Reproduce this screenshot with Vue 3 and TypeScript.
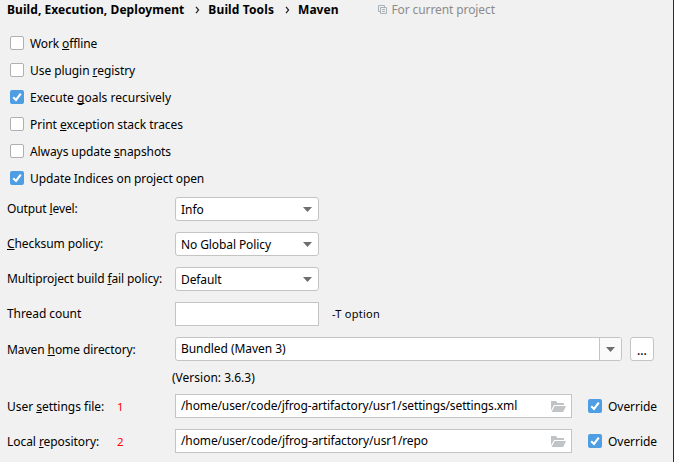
<script setup lang="ts">
interface Label { before: string; key: string; after: string; ls: number }
interface Option extends Label { checked: boolean }
interface Choice extends Label { value: string; vls: number }
interface PathRow extends Label { mark: string; path: string; vls: number }

const options: Option[] = [
  { before: 'Work ', key: 'o', after: 'ffline', ls: -0.12, checked: false },
  { before: 'Use plugin ', key: 'r', after: 'egistry', ls: -0.07, checked: false },
  { before: 'Execute ', key: 'g', after: 'oals recursively', ls: 0.01, checked: true },
  { before: 'Print ', key: 'e', after: 'xception stack traces', ls: -0.04, checked: false },
  { before: 'Always update ', key: 's', after: 'napshots', ls: -0.08, checked: false },
  { before: 'Update Indices on project open', key: '', after: '', ls: -0.09, checked: true },
]
const choices: Choice[] = [
  { before: 'Output ', key: 'l', after: 'evel:', ls: -0.12, value: 'Info', vls: 0 },
  { before: '', key: 'C', after: 'hecksum policy:', ls: -0.08, value: 'No Global Policy', vls: -0.1 },
  { before: 'Multiproject build ', key: 'f', after: 'ail policy:', ls: -0.12, value: 'Default', vls: -0.1 },
]
const paths: PathRow[] = [
  { before: 'User ', key: 's', after: 'ettings file:', ls: -0.02, mark: '1', path: '/home/user/code/jfrog-artifactory/usr1/settings/settings.xml', vls: -0.12 },
  { before: 'Local ', key: 'r', after: 'epository:', ls: -0.06, mark: '2', path: '/home/user/code/jfrog-artifactory/usr1/repo', vls: -0.105 },
]
const spacing = (v: number) => ({ letterSpacing: `${v}px` })
</script>

<template>
  <main class="page">
    <header class="crumbs">
      <b class="c1">Build, Execution, Deployment</b>
      <svg class="chev" viewBox="0 0 5 8"><path d="M1 .8 3.6 4 1 7.2" /></svg>
      <b class="c2">Build Tools</b>
      <svg class="chev" viewBox="0 0 5 8"><path d="M1 .8 3.6 4 1 7.2" /></svg>
      <b class="c3">Maven</b>
      <svg class="copy" viewBox="0 0 9 9"><path d="M2.5 6.5h-2v-6h6v2M2.5 2.5h6v6h-6zM4 4.5h3M4 6.5h3" /></svg>
      <span class="scope">For current project</span>
    </header>

    <section class="options">
      <label v-for="o in options" :key="o.before" class="option">
        <span class="box" :class="{ on: o.checked }">
          <svg v-if="o.checked" viewBox="0 0 14 14"><path d="M3.2 7.2 6 10 10.8 3.6" /></svg>
        </span>
        <span class="text" :style="spacing(o.ls)">{{ o.before }}<u>{{ o.key }}</u>{{ o.after }}</span>
      </label>
    </section>

    <section class="form">
      <div v-for="c in choices" :key="c.value" class="row">
        <span class="name"><span :style="spacing(c.ls)">{{ c.before }}<u>{{ c.key }}</u>{{ c.after }}</span></span>
        <div class="field select">
          <span class="value" :style="spacing(c.vls)">{{ c.value }}</span>
          <svg class="arrow" viewBox="0 0 9 5"><path d="M0 0h9L4.5 5z" /></svg>
        </div>
      </div>
      <div class="row">
        <span class="name thread-label">Thread count</span>
        <div class="field thread"></div>
        <span class="hint">-T option</span>
      </div>
      <div class="row">
        <span class="name low"><span class="home-label">Maven <u>h</u>ome directory:</span></span>
        <div class="field combo">
          <span class="value high">Bundled (Maven 3)</span>
          <span class="drop"><svg class="arrow" viewBox="0 0 9 5"><path d="M0 0h9L4.5 5z" /></svg></span>
        </div>
        <button class="more">...</button>
      </div>
    </section>
    <div class="version">(Version: 3.6.3)</div>
    <section class="form">
      <div v-for="p in paths" :key="p.mark" class="row">
        <span class="name low"><span :style="spacing(p.ls)">{{ p.before }}<u>{{ p.key }}</u>{{ p.after }}</span></span>
        <span class="mark">{{ p.mark }}</span>
        <div class="field path">
          <span class="value high" :style="spacing(p.vls)">{{ p.path }}</span>
          <svg class="folder" viewBox="0 0 16 12"><path d="M0 9.5V0h5l1.5 2H13v2H3z" /><path d="M3.6 5H15l-2.8 6H.6z" /></svg>
        </div>
        <label class="override">
          <span class="box on"><svg viewBox="0 0 14 14"><path d="M3.2 7.2 6 10 10.8 3.6" /></svg></span>
          <span class="ov">Override</span>
        </label>
      </div>
    </section>
  </main>
</template>

<style>
body { background: #f1f1f1; }
</style>
<style scoped>
.page { box-sizing: border-box; width: 674px; height: 462px; overflow: hidden; background: #f1f1f1; border-right: 1px solid #2b2b2b; color: #000; font: 12px/17px "Noto Sans", sans-serif; white-space: pre; }
.crumbs { box-sizing: border-box; display: flex; align-items: flex-start; height: 30px; padding: 1px 0 0 7px; }
.crumbs b { color: #000; font-weight: 700; letter-spacing: .07px; }
.crumbs .c2 { letter-spacing: .13px; }
.crumbs .c3 { letter-spacing: 0; }
.chev { width: 5px; height: 8px; margin: 5px 8px 0 11px; fill: none; stroke: #222; stroke-width: 1.2; flex: none; }
.copy { width: 9px; height: 9px; margin: 4px 4px 0 40px; fill: none; stroke: #a9b1b7; stroke-width: 1; flex: none; }
.scope { color: #8c8c8c; letter-spacing: -.1px; }
u { text-decoration: underline 1px; text-underline-offset: 1px; text-decoration-skip-ink: none; }
.option { box-sizing: border-box; display: flex; align-items: flex-start; height: 27px; padding: 5px 0 0 10px; gap: 6px; }
.box { box-sizing: border-box; width: 14px; height: 14px; margin-top: 1px; border: 1px solid #b0b0b0; border-radius: 2px; background: #fff; flex: none; }
.box.on { border: 0; background: #4f9ee3; }
.box svg { display: block; width: 14px; height: 14px; fill: none; stroke: #fff; stroke-width: 2.1; }
.form { display: flex; flex-direction: column; gap: 11px; }
.options + .form { padding-top: 5px; }
.row { position: relative; display: flex; align-items: flex-start; height: 24px; padding-left: 7px; }
.name { width: 168px; padding-top: 3px; flex: none; }
.name.low { padding-top: 4px; }
.thread-label { letter-spacing: -.07px; }
.home-label { letter-spacing: -.08px; }
.field { box-sizing: border-box; display: flex; align-items: flex-start; justify-content: space-between; width: 144px; height: 24px; padding: 0 6px 0 5px; border: 1px solid #c4c4c4; background: #fff; }
.value { padding-top: 3px; letter-spacing: -.05px; }
.value.high { padding-top: 2px; }
.select, .combo { border-radius: 3px; }
.arrow { width: 9px; height: 5px; margin-top: 9px; fill: #6e6e6e; flex: none; }
.hint { margin: 3px 0 0 13px; font-size: 11px; letter-spacing: .25px; }
.combo { width: 447px; padding-right: 0; }
.drop { box-sizing: border-box; display: flex; align-items: flex-start; justify-content: center; width: 22px; height: 22px; border-left: 1px solid #c4c4c4; background: #fafafa; border-radius: 0 2px 2px 0; }
.more { box-sizing: border-box; width: 24px; height: 24px; margin-left: 8px; padding: 3px 0 0; border: 1px solid #c4c4c4; border-radius: 3px; background: #fff; color: #000; font: inherit; font-weight: 500; line-height: 17px; }
.version { box-sizing: border-box; height: 33px; padding: 8px 0 0 172px; }
.path { width: 397px; padding-right: 4px; }
.folder { width: 16px; height: 12px; margin-top: 6px; fill: #c0c4c7; flex: none; }
.mark { position: absolute; left: 117px; top: 4px; color: #ff0000; font-size: 11.5px; }
.override { display: flex; align-items: flex-start; gap: 6px; margin: 4px 0 0 16px; letter-spacing: -.04px; }
</style>
